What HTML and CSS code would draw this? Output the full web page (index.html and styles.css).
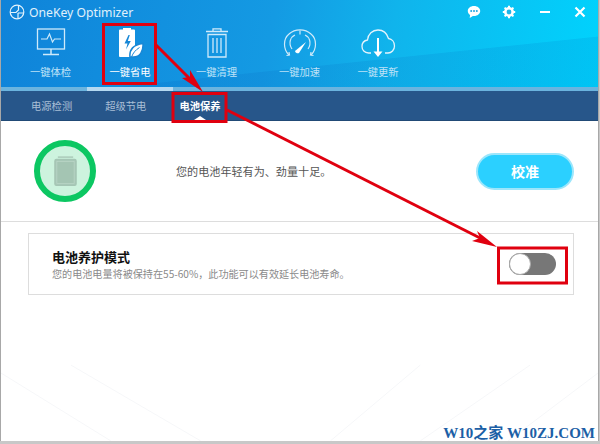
FILE: index.html
```html
<!DOCTYPE html>
<html lang="zh-CN">

<head>
    <meta charset="UTF-8">
    <title>OneKey Optimizer</title>
    <link rel="stylesheet" href="styles.css">
</head>

<body>

    <div class="window">
        <header class="header">
            <div class="titlebar">
                <svg class="logo" viewBox="0 0 16 16">
                    <circle cx="8" cy="8" r="6.8" fill="none" stroke="#e4f3fc" stroke-width="1.2"/>
                    <path d="M1.500 8.500H7L9.500 6V1.500M9 9v5.500M9 9h5.500" fill="none" stroke="#e4f3fc" stroke-width="1.200"/>
                </svg>
                <span class="app-name">OneKey Optimizer</span>
                <div class="win-buttons">
                    <svg class="win-icon" viewBox="0 0 14 14">
                        <path d="M7 1C3.400 1 .8 3.200.8 6.100c0 1.700.9 3.100 2.300 4L2.700 13l3.200-2c.4 0 .7.100 1.100.100 3.600 0 6.200-2.200 6.200-5S10.600 1 7 1z" fill="#fff"/>
                        <circle cx="4.200" cy="6.100" r="1" fill="#22a5e0"/>
                        <circle cx="7" cy="6.100" r="1" fill="#22a5e0"/>
                        <circle cx="9.800" cy="6.100" r="1" fill="#22a5e0"/>
                    </svg>
                    <svg class="win-icon" viewBox="0 0 14 14">
                        <circle cx="7" cy="7" r="3.800" fill="none" stroke="#fff" stroke-width="2.400"/>
                        <path d="M7 .8v12.400M.8 7h12.400M2.600 2.600l8.800 8.800M11.400 2.600l-8.800 8.800" stroke="#fff" stroke-width="2"/>
                        <circle cx="7" cy="7" r="2.400" fill="#1eb4e8"/>
                    </svg>
                    <svg class="win-icon" viewBox="0 0 14 14">
                        <path d="M2 7h10" stroke="#fff" stroke-width="2"/>
                    </svg>
                    <svg class="win-icon" viewBox="0 0 14 14">
                        <path d="M2.500 2.500l9 9M11.500 2.500l-9 9" stroke="#fff" stroke-width="2.200"/>
                    </svg>
                </div>
            </div>

            <nav class="main-nav">
                <div class="nav-item">
                    <svg class="nav-icon" viewBox="0 0 40 30">
                        <rect x="6.500" y="1" width="27" height="20" fill="none" stroke="#cfeafa" stroke-width="1.300"/>
                        <path d="M10 11h6l2.500-5 3 8 2-3h6.500" fill="none" stroke="#cfeafa" stroke-width="1.200"/>
                        <path d="M20 21v5M12 26.500h16" fill="none" stroke="#cfeafa" stroke-width="1.500"/>
                    </svg>
                    <span class="nav-label">一键体检</span>
                </div>
                <div class="nav-item active">
                    <svg class="nav-icon" viewBox="0 0 40 30">
                        <path d="M10 1.500h3V0h8v1.500h3a1 1 0 0 1 1 1V28a1 1 0 0 1-1 1H10a1 1 0 0 1-1-1V2.500a1 1 0 0 1 1-1z" fill="#fff"/>
                        <path d="M18.500 7l-4 8.500h3l-1.500 6 4.800-8.500h-3l2-6z" fill="#1787d6"/>
                        <path d="M20 29.500c-1-8 3.500-13 13-14 .5 8-3 14-10.500 13.500z" fill="#fff" stroke="#1787d6" stroke-width="1.500"/>
                        <path d="M21.500 29c1.500-4 4-7 8-9.500" fill="none" stroke="#1787d6" stroke-width="1"/>
                    </svg>
                    <span class="nav-label">一键省电</span>
                </div>
                <div class="nav-item">
                    <svg class="nav-icon" viewBox="0 0 40 30">
                        <path d="M9 3.500h22M16 3.500V.8h8v2.700" fill="none" stroke="#cfeafa" stroke-width="1.300"/>
                        <path d="M11 6.500h18V29H11z" fill="none" stroke="#cfeafa" stroke-width="1.300"/>
                        <path d="M16 10v15M20 10v15M24 10v15" fill="none" stroke="#cfeafa" stroke-width="1.300"/>
                    </svg>
                    <span class="nav-label">一键清理</span>
                </div>
                <div class="nav-item">
                    <svg class="nav-icon" viewBox="0 0 40 30">
                        <path d="M9 27C3 21 3 11 9 6c6-5.500 16-5.500 22 0 6 5 6 15 0 21" fill="none" stroke="#cfeafa" stroke-width="1.200"/>
                        <path d="M12 21C8 15 10.500 9 15 7M25 7c4.500 2 7 8 3 14" fill="none" stroke="#cfeafa" stroke-width="1.200"/>
                        <path d="M20 2.500v4M6.500 27.500l3-.5-.5-3M33.500 27.500l-3-.5.5-3" fill="none" stroke="#cfeafa" stroke-width="1.200"/>
                        <path d="M15 23l11-9-7 11a2.800 2.800 0 0 1-4-2z" fill="#fff"/>
                    </svg>
                    <span class="nav-label">一键加速</span>
                </div>
                <div class="nav-item">
                    <svg class="nav-icon" viewBox="0 0 40 30">
                        <path d="M13 25H10.500C6.500 25 4 22 4 18.500S6.500 12.500 9.500 12c.5-6 5-10 10.500-10s9 3.500 10.500 8.500c3.500.5 6 3.500 6 7.500s-3 7-6.500 7H27" fill="none" stroke="#e4f3fc" stroke-width="1.300"/>
                        <path d="M20 10v15" fill="none" stroke="#fff" stroke-width="2"/>
                        <path d="M15.500 23.500h9L20 29z" fill="#fff"/>
                    </svg>
                    <span class="nav-label">一键更新</span>
                </div>
            </nav>
        </header>

        <div class="strip">
            <div class="strip-active"></div>
        </div>

        <div class="tabs">
            <span class="tab">电源检测</span>
            <span class="tab">超级节电</span>
            <span class="tab selected">电池保养</span>
        </div>

        <main class="content">
            <svg class="floor" viewBox="0 0 598 100">
                <path d="M0 32l110 68M70 24l130 76M420 24l-90 76M530 24l-110 76M598 32l-90 68" fill="none" stroke="#f6f7f9" stroke-width="1"/>
            </svg>

            <section class="status">
                <div class="ring">
                    <svg class="battery" viewBox="0 0 24 32">
                        <path d="M4 1.500h16" fill="none" stroke="#a9c9b8" stroke-width="1.500"/>
                        <rect x="1" y="4" width="22" height="27" rx="1.500" fill="#a9c9b8" stroke="#a5c5b4" stroke-width="1.500"/>
                        <rect x="3" y="6" width="18" height="23" fill="#a4c5b3" stroke="#bcd8c9" stroke-width=".7"/>
                    </svg>
                </div>
                <p class="status-text">您的电池年轻有为、劲量十足。</p>
                <button class="calibrate">校准</button>
            </section>

            <section class="card">
                <div class="card-text">
                    <h3 class="card-title">电池养护模式</h3>
                    <p class="card-desc">您的电池电量将被保持在55-60%，此功能可以有效延长电池寿命。</p>
                </div>
                <div class="switch">
                    <div class="knob"></div>
                </div>
            </section>
        </main>
    </div>

    <svg class="marks" viewBox="0 0 600 444">
        <g fill="none" stroke="#e0000f" stroke-width="3">
            <rect x="103.500" y="24.500" width="52" height="59"/>
            <rect x="173" y="93.500" width="53" height="28"/>
            <rect x="498.500" y="248" width="68" height="35"/>
        </g>
        <path d="M156 45L195 84" stroke="#e0000f" stroke-width="3" fill="none"/>
        <path d="M203 92L182 78l8-1 0-7z" fill="#e0000f"/>
        <path d="M227 110L484 240" stroke="#e0000f" stroke-width="3" fill="none"/>
        <path d="M497 247L472 241l8-3-3-7z" fill="#e0000f"/>
    </svg>

    <div class="watermark">W10之家 W10ZJ.COM</div>

</body>

</html>
```

FILE: styles.css
```css
body {
    margin: 0;
    padding: 0;
    width: 600px;
    height: 444px;
    overflow: hidden;
    position: relative;
    background-color: #c8c8c8;
    font-family: "Noto Sans CJK SC", "Noto Sans", sans-serif;
}

.window {
    width: 599px;
    height: 441px;
    box-sizing: border-box;
    display: flex;
    flex-direction: column;
    border-left: 1px solid #a8a8a8;
    border-right: 1px solid #a8a8a8;
}

.header {
    height: 87px;
    flex: none;
    background:
        linear-gradient(174deg, transparent 66%, rgba(0, 70, 170, .1) 66.6%),
        linear-gradient(100deg, #0f83d9 0%, #149ae3 45%, #10b4ec 65%, #00d3fd 100%);
}

.titlebar {
    height: 24px;
    display: flex;
    align-items: center;
    padding-left: 8px;
}

.logo {
    width: 16px;
    height: 16px;
}

.app-name {
    margin-left: 4px;
    font-family: "Noto Sans", sans-serif;
    font-size: 12.200px;
    color: #e0f1fb;
}

.win-buttons {
    margin-left: auto;
    padding-right: 11px;
    display: flex;
    gap: 21.500px;
}

.win-icon {
    width: 14px;
    height: 14px;
}

.main-nav {
    display: grid;
    grid-template-columns: 79px 80px 93px 73px 84px;
    padding-left: 10px;
    padding-top: 4px;
}

.nav-item {
    display: flex;
    flex-direction: column;
    align-items: center;
}

.nav-icon {
    width: 40px;
    height: 30px;
}

.nav-label {
    margin-top: 7px;
    font-size: 10.300px;
    line-height: 14px;
    color: #bfe2f7;
}

.nav-item.active .nav-label {
    color: #fff;
}

.strip {
    height: 4px;
    flex: none;
    background-color: #6bb4df;
}

.strip-active {
    width: 86px;
    height: 4px;
    margin-left: 86px;
    background-color: #b5d9f1;
}

.tabs {
    height: 30px;
    flex: none;
    display: flex;
    align-items: center;
    padding-left: 30px;
    gap: 33px;
    position: relative;
    background-color: #27568a;
    border-bottom: 1px solid #214a76;
    box-sizing: border-box;
}

.tab {
    font-size: 10.300px;
    color: #a9bfd6;
}

.tab.selected {
    font-weight: bold;
    color: #fff;
}

.tab.selected::after {
    content: "";
    position: absolute;
    left: 193px;
    bottom: 0;
    border-left: 6px solid transparent;
    border-right: 6px solid transparent;
    border-bottom: 4px solid #fff;
}

.content {
    flex: 1;
    position: relative;
    background-color: #fff;
    display: flex;
    flex-direction: column;
}

.status {
    height: 101px;
    flex: none;
    display: flex;
    align-items: center;
    padding-left: 33px;
    padding-right: 24px;
    border-bottom: 1px solid #ddd;
    box-sizing: border-box;
    position: relative;
}

.ring {
    width: 62px;
    height: 62px;
    box-sizing: border-box;
    border: 6px solid #0cc762;
    border-radius: 50%;
    background-color: #cdf3de;
    display: flex;
    align-items: center;
    justify-content: center;
}

.battery {
    width: 23px;
    height: 32px;
}

.status-text {
    margin: 0 0 0 80px;
    font-size: 11.100px;
    color: #555;
}

.calibrate {
    margin-left: auto;
    width: 98px;
    height: 37px;
    border: 2px solid #9ce6fb;
    border-radius: 19px;
    background-color: #2bd0ff;
    color: #fff;
    font-family: inherit;
    font-size: 14px;
    font-weight: bold;
}

.card {
    width: 546px;
    height: 62px;
    box-sizing: border-box;
    margin: 11px 0 0 27px;
    border: 1px solid #ddd;
    display: flex;
    align-items: center;
    padding-left: 23px;
    padding-right: 17px;
    position: relative;
    background-color: #fff;
}

.card-title {
    margin: 0;
    font-size: 13px;
    line-height: 18px;
    color: #111;
}

.card-desc {
    margin: 0;
    font-size: 10.100px;
    line-height: 15px;
    color: #8a8a8a;
}

.switch {
    margin-left: auto;
    width: 47px;
    height: 22px;
    border-radius: 11px;
    background-color: #777;
    display: flex;
    align-items: center;
}

.knob {
    width: 20px;
    height: 20px;
    border-radius: 50%;
    background-color: #fff;
    border: 1px solid #aaa;
}

.floor {
    position: absolute;
    left: 0;
    bottom: 0;
    width: 597px;
    height: 100px;
}

.marks {
    position: absolute;
    left: 0;
    top: 0;
    width: 600px;
    height: 444px;
}

.watermark {
    position: absolute;
    right: 5px;
    bottom: 3px;
    font-family: "Liberation Serif", "Noto Sans CJK SC", serif;
    font-size: 15px;
    line-height: 15px;
    font-weight: bold;
    color: #1c5fa6;
    white-space: nowrap;
}
```
